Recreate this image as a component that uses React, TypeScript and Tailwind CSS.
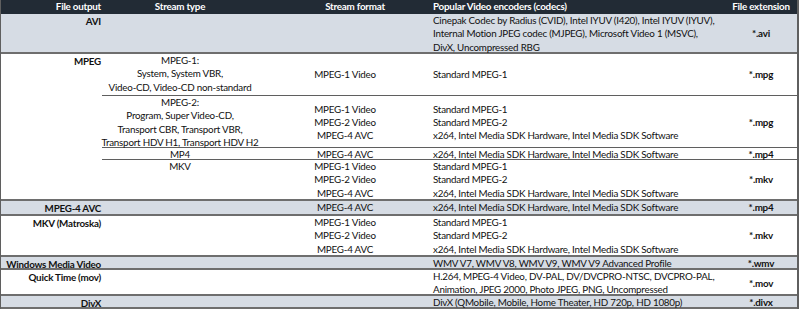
import React from 'react';

const font = { fontFamily: 'Lato, "Noto Sans", sans-serif' };

type Sub = { type?: string[]; format?: string[]; codecs: string[]; ext: string; h: string };

const SubRow: React.FC<{ s: Sub; last?: boolean }> = ({ s, last }) => (
  <div className={`grid grid-cols-[156px_174px_293px_72px] ${s.h} ${last ? '' : 'border-b border-[#5f5f5f]'}`}>
    <div className="flex flex-col items-center text-center">
      {(s.type || []).map((t, i) => <span key={i}>{t}</span>)}
    </div>
    <div className="flex flex-col items-center justify-center text-center">
      {(s.format || []).map((t, i) => <span key={i}>{t}</span>)}
    </div>
    <div className="flex flex-col justify-center pl-[1px]">
      {s.codecs.map((t, i) => <span key={i}>{t}</span>)}
    </div>
    <div className="flex items-center justify-center font-bold">{s.ext}</div>
  </div>
);

const Group: React.FC<{ name: string; gray?: boolean; subs: Sub[] }> = ({ name, gray, subs }) => (
  <div className={`flex ${gray ? 'bg-[#d6dce4]' : 'bg-white'} border-b-2 border-[#6e6e6e]`}>
    <div className="w-[101px] h-0 shrink-0 flex justify-end font-bold pr-[1px] pt-[1px]">
      <span>{name}</span>
    </div>
    <div className="flex flex-col">
      {subs.map((s, i) => <SubRow key={i} s={s} last={i === subs.length - 1} />)}
    </div>
  </div>
);

const x264 = 'x264, Intel Media SDK Hardware, Intel Media SDK Software';

export default function App() {
  return (
    <div className="w-[800px] h-[312px] bg-white overflow-hidden" style={font}>
      <div className="w-[799px] border-l border-r-2 border-[#5f5f5f] text-[9.8px] leading-[13.3px] text-[#111111] tracking-[-0.22px] whitespace-nowrap">
        <div className="grid grid-cols-[101px_156px_174px_293px_72px] h-[14px] bg-[#222b35] text-white font-bold items-center">
          <div className="text-right pr-[1px]">File output</div>
          <div className="text-center">Stream type</div>
          <div className="text-center pl-[20px]">Stream format</div>
          <div className="pl-[1px]">Popular Video encoders (codecs)</div>
          <div className="text-center">File extension</div>
        </div>

        <Group
          name="AVI"
          gray
          subs={[{
            h: 'h-[38px]',
            codecs: [
              'Cinepak Codec by Radius (CVID), Intel IYUV (I420), Intel IYUV (IYUV),',
              'Internal Motion JPEG codec (MJPEG), Microsoft Video 1 (MSVC),',
              'DivX, Uncompressed RBG',
            ],
            ext: '*.avi',
          }]}
        />

        <Group
          name="MPEG"
          subs={[
            { h: 'h-[42px]', type: ['MPEG-1:', 'System, System VBR,', 'Video-CD, Video-CD non-standard'], format: ['MPEG-1 Video'], codecs: ['Standard MPEG-1'], ext: '*.mpg' },
            { h: 'h-[52px]', type: ['MPEG-2:', 'Program, Super Video-CD,', 'Transport CBR, Transport VBR,', 'Transport HDV H1, Transport HDV H2'], format: ['MPEG-1 Video', 'MPEG-2 Video', 'MPEG-4 AVC'], codecs: ['Standard MPEG-1', 'Standard MPEG-2', x264], ext: '*.mpg' },
            { h: 'h-[12px]', type: ['MP4'], format: ['MPEG-4 AVC'], codecs: [x264], ext: '*.mp4' },
            { h: 'h-[39px]', type: ['MKV'], format: ['MPEG-1 Video', 'MPEG-2 Video', 'MPEG-4 AVC'], codecs: ['Standard MPEG-1', 'Standard MPEG-2', x264], ext: '*.mkv' },
          ]}
        />

        <Group name="MPEG-4 AVC" gray subs={[{ h: 'h-[13px]', format: ['MPEG-4 AVC'], codecs: [x264], ext: '*.mp4' }]} />

        <Group
          name="MKV (Matroska)"
          subs={[{ h: 'h-[39px]', format: ['MPEG-1 Video', 'MPEG-2 Video', 'MPEG-4 AVC'], codecs: ['Standard MPEG-1', 'Standard MPEG-2', x264], ext: '*.mkv' }]}
        />

        <Group name="Windows Media Video" gray subs={[{ h: 'h-[11px]', codecs: ['WMV V7, WMV V8, WMV V9, WMV V9 Advanced Profile'], ext: '*.wmv' }]} />

        <Group
          name="Quick Time (mov)"
          subs={[{
            h: 'h-[24px]',
            codecs: [
              'H.264, MPEG-4 Video, DV-PAL, DV/DVCPRO-NTSC, DVCPRO-PAL,',
              'Animation, JPEG 2000, Photo JPEG, PNG, Uncompressed',
            ],
            ext: '*.mov',
          }]}
        />

        <Group name="DivX" gray subs={[{ h: 'h-[11px]', codecs: ['DivX (QMobile, Mobile, Home Theater, HD 720p, HD 1080p)'], ext: '*.divx' }]} />
      </div>
    </div>
  );
}
